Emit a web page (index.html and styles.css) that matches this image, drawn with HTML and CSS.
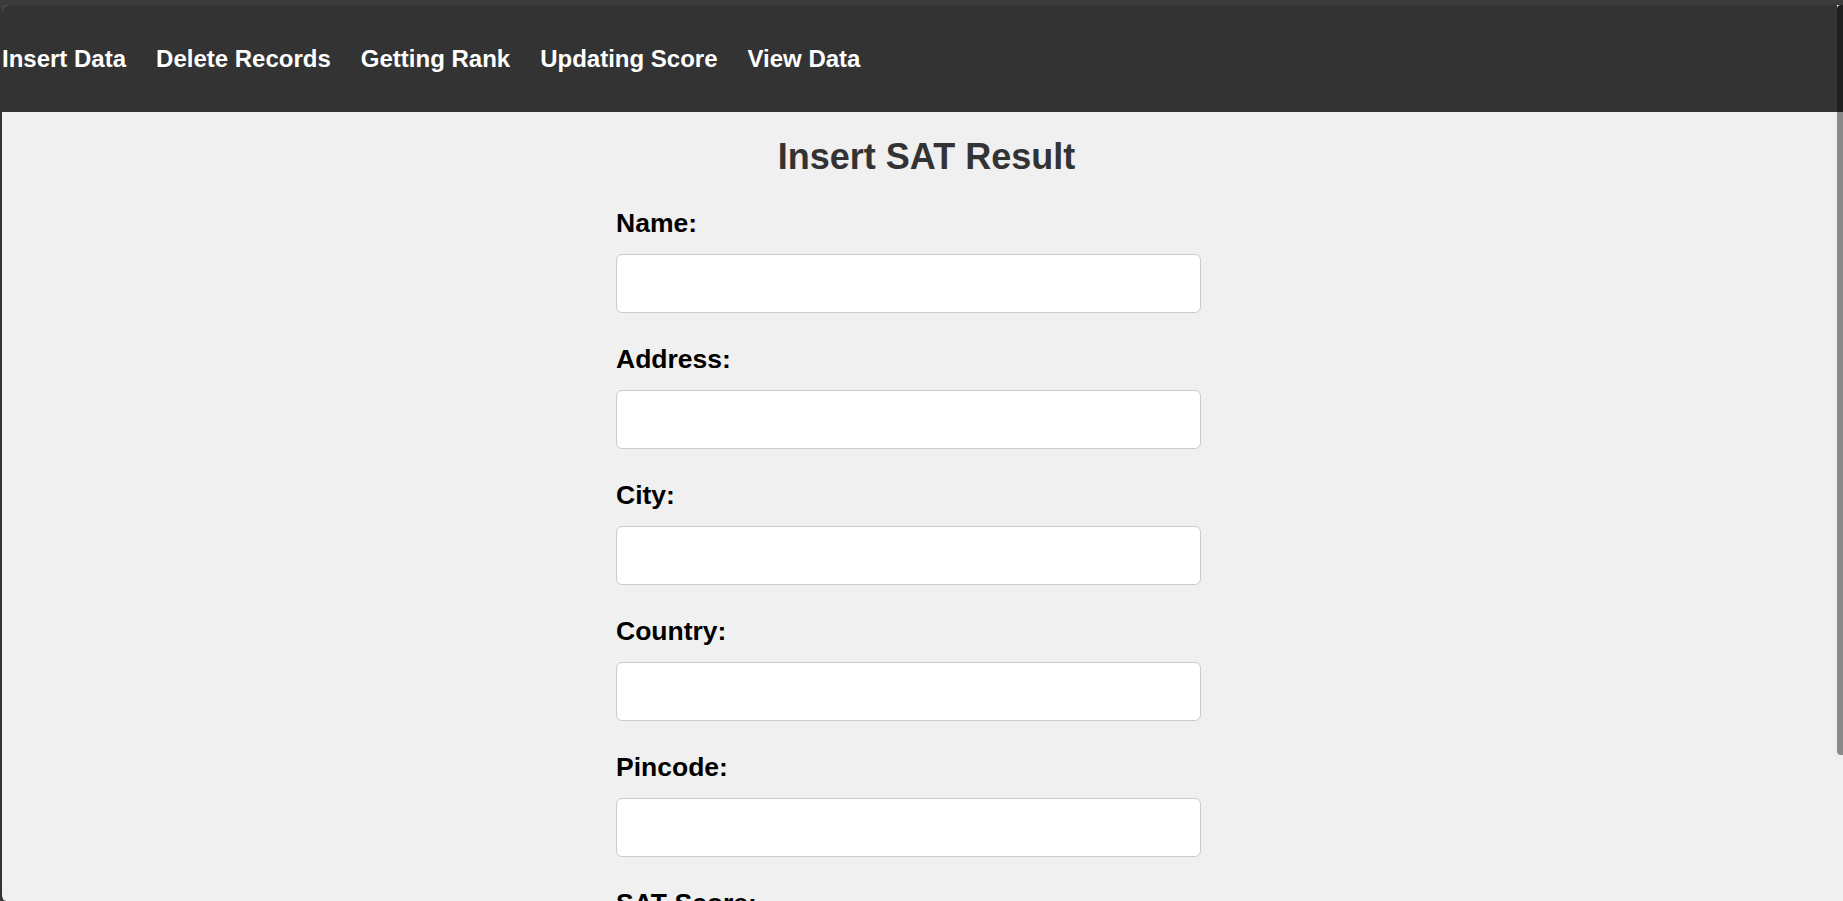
FILE: index.html
```html
<!DOCTYPE html>
<html lang="en">
<head>
<meta charset="utf-8">
<title>Insert SAT Result</title>
<link rel="stylesheet" href="styles.css">
</head>
<body>
<div class="window">
  <div class="viewport">
    <nav class="topnav">
      <a href="#" class="nav-link">Insert Data</a>
      <a href="#" class="nav-link">Delete Records</a>
      <a href="#" class="nav-link">Getting Rank</a>
      <a href="#" class="nav-link">Updating Score</a>
      <a href="#" class="nav-link">View Data</a>
    </nav>
    <main class="page">
      <div class="container">
        <h2 class="title">Insert SAT Result</h2>
        <form class="form">
          <div class="field">
            <label class="field-label" for="name">Name:</label>
            <input class="field-input" type="text" id="name">
          </div>
          <div class="field">
            <label class="field-label" for="address">Address:</label>
            <input class="field-input" type="text" id="address">
          </div>
          <div class="field">
            <label class="field-label" for="city">City:</label>
            <input class="field-input" type="text" id="city">
          </div>
          <div class="field">
            <label class="field-label" for="country">Country:</label>
            <input class="field-input" type="text" id="country">
          </div>
          <div class="field">
            <label class="field-label" for="pincode">Pincode:</label>
            <input class="field-input" type="text" id="pincode">
          </div>
          <div class="field">
            <label class="field-label" for="score">SAT Score:</label>
            <input class="field-input" type="text" id="score">
          </div>
        </form>
      </div>
    </main>
  </div>
  <div class="scrollbar">
    <div class="sb-top"></div>
    <div class="sb-thumb"></div>
  </div>
</div>
</body>
</html>
```

FILE: styles.css
```css
html, body {
  margin: 0;
  padding: 0;
}

body {
  background: #3b3b3b;
  height: 901px;
  overflow: hidden;
  font-family: "Liberation Sans", Arial, sans-serif;
}

.window {
  margin-top: 5px;
  height: 896px;
  display: flex;
  border-left: 2px solid #333333;
  border-radius: 8px 0 0 6px;
  overflow: hidden;
  background: #f0f0f0;
}

.viewport {
  flex: 1;
  display: flex;
  flex-direction: column;
  overflow: hidden;
}

.topnav {
  flex: 0 0 107px;
  background: #333333;
  display: flex;
  align-items: center;
  gap: 30px;
}

.nav-link {
  color: #ffffff;
  text-decoration: none;
  font-size: 24px;
  font-weight: bold;
  line-height: 28px;
}

.page {
  display: flex;
  justify-content: center;
  padding-left: 14px;
  padding-top: 24px;
}

.container {
  width: 621px;
}

.title {
  margin: 0 0 30px 0;
  text-align: center;
  font-size: 36px;
  line-height: 42px;
  font-weight: bold;
  color: #333333;
}

.form {
  display: flex;
  flex-direction: column;
  gap: 31px;
}

.field {
  display: flex;
  flex-direction: column;
  gap: 16px;
}

.field-label {
  font-size: 26.5px;
  line-height: 30px;
  font-weight: bold;
  color: #000000;
}

.field-input {
  box-sizing: border-box;
  width: 585px;
  height: 59px;
  margin: 0;
  border: 1px solid #cccccc;
  border-radius: 6px;
  background: #ffffff;
  font-family: "Liberation Sans", Arial, sans-serif;
  font-size: 24px;
  padding: 0 12px;
}

.scrollbar {
  flex: 0 0 6px;
  display: flex;
  flex-direction: column;
}

.sb-top {
  height: 107px;
  background: #1f1f1f;
  border-top-left-radius: 4px;
}

.sb-thumb {
  height: 643px;
  background: #8a8a8a;
  border-bottom-left-radius: 4px;
}
```
